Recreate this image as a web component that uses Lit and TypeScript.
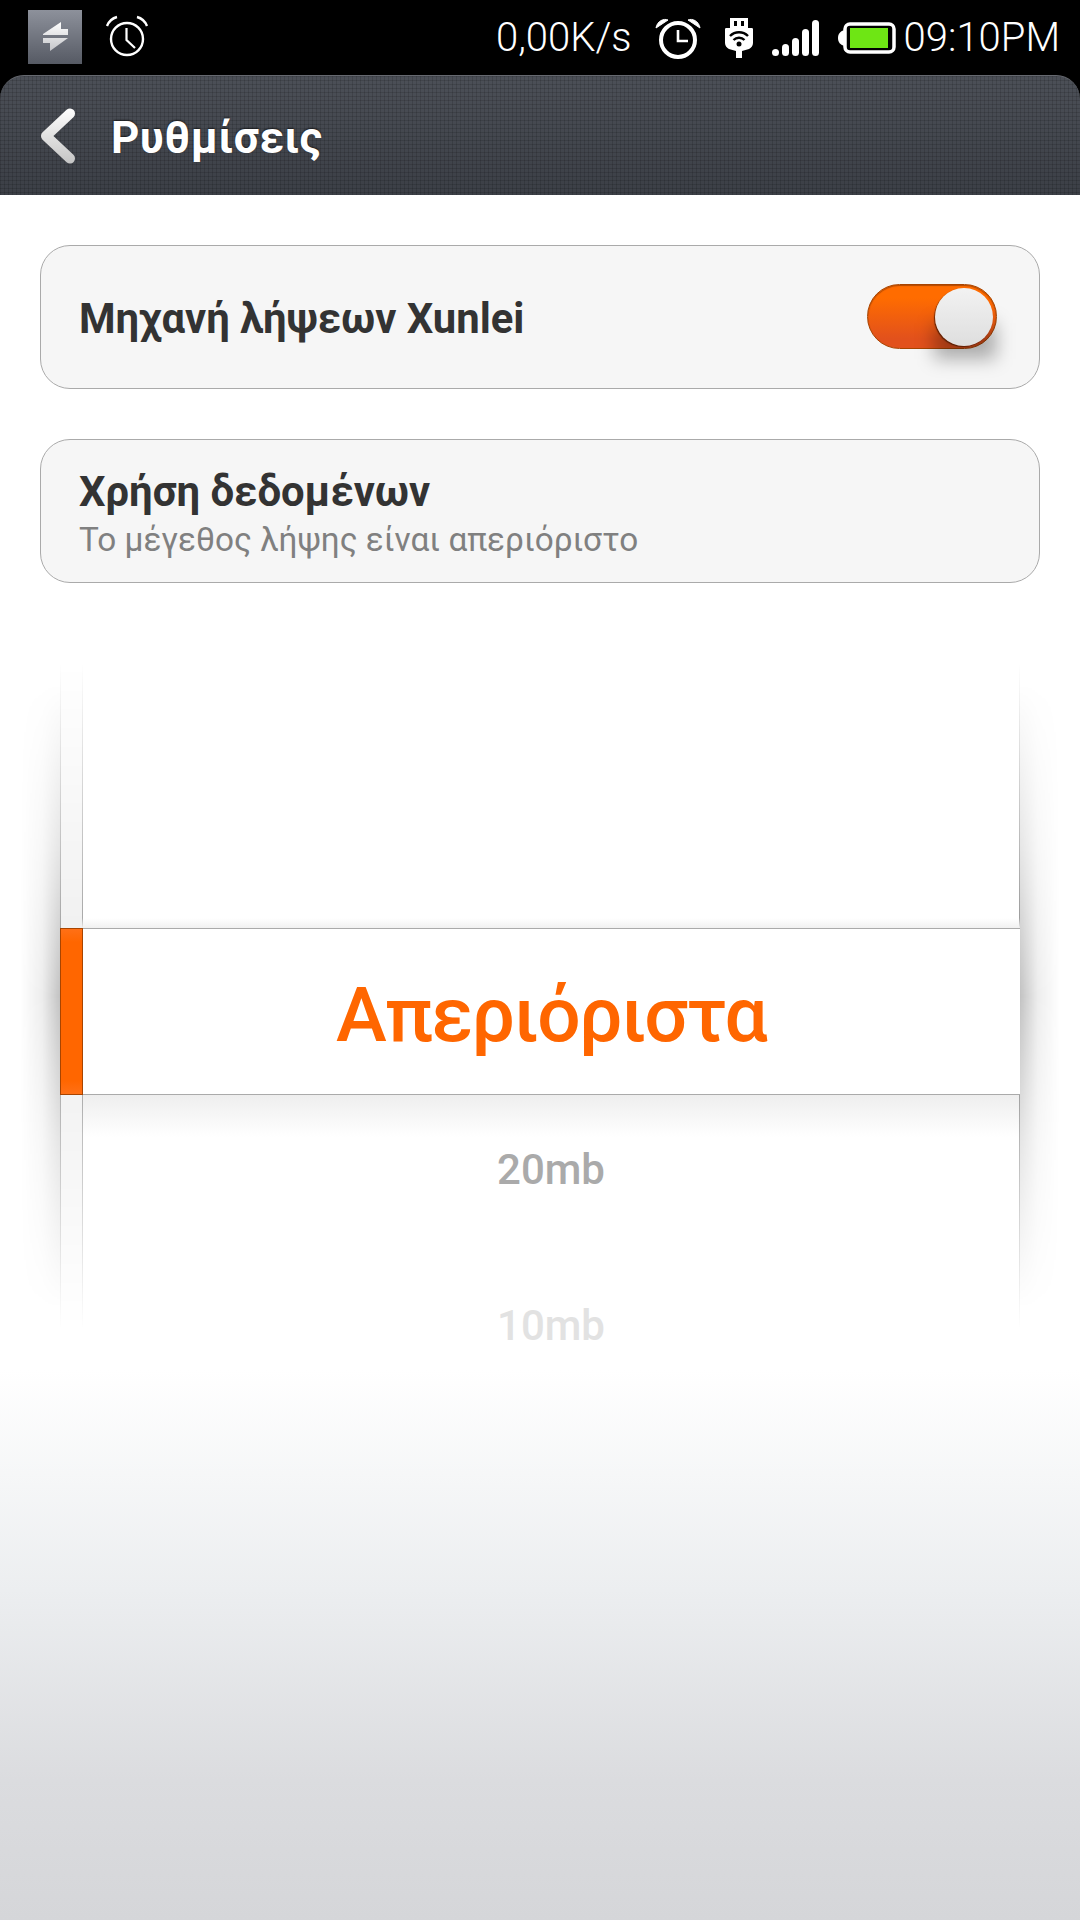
import { LitElement, html, css } from "lit";
import { customElement } from "lit/decorators.js";

@customElement("app-root")
export class AppRoot extends LitElement {
  static styles = css`
    :host {
      display: block;
      width: 1080px;
      height: 1920px;
      overflow: hidden;
      font-family: Roboto, "Noto Sans", sans-serif;
      background: linear-gradient(#fff 1370px, #eceef0 1590px, #dbdcdf 1780px, #d5d6d9 1920px);
    }
    .status {
      height: 75px;
      background: #000;
      display: flex;
      align-items: center;
      color: #fff;
      box-sizing: border-box;
      padding: 0 20px 0 28px;
    }
    .status svg { display: block; flex: none; }
    .notif { width: 54px; height: 54px; margin-top: -1px; }
    .alarm-l { margin-left: 23px; margin-top: -1px; }
    .stxt { font-size: 40px; font-weight: 300; line-height: 75px; white-space: nowrap; }
    .speed { margin-left: auto; }
    .alarm-r { margin-left: 23px; }
    .usb { margin-left: 23px; }
    .signal { margin-left: 18px; }
    .batt { margin-left: 18px; }
    .time { margin-left: 8px; }

    .bar-bg { background: #000; }
    .bar {
      height: 120px;
      border-radius: 24px 24px 0 0;
      box-sizing: border-box;
      background-color: #42464e;
      background-image:
        linear-gradient(90deg, rgba(0, 0, 0, 0.13) 1px, transparent 1px),
        linear-gradient(rgba(0, 0, 0, 0.13) 1px, transparent 1px),
        linear-gradient(rgba(255, 255, 255, 0.05), rgba(0, 0, 0, 0.1));
      background-size: 4px 4px, 4px 4px, 100% 100%;
      border-top: 1px solid #666970;
      display: flex;
      align-items: center;
      padding-left: 40px;
    }
    .title {
      margin-left: 35px;
      margin-top: 4px;
      font-size: 44px;
      font-weight: 700;
      color: #fff;
      text-shadow: 0 -1px 2px rgba(0, 0, 0, 0.6);
      letter-spacing: 0.5px;
    }
    .main { padding: 50px 40px 0; display: flex; flex-direction: column; gap: 50px; }
    .card {
      height: 144px;
      box-sizing: border-box;
      border: 1px solid #aaa;
      border-radius: 30px;
      background: #f6f6f6;
      padding: 0 42px 0 38px;
      display: flex;
      align-items: center;
      justify-content: space-between;
    }
    .ct { font-size: 41.800px; font-weight: 700; color: #333; line-height: 50px; }
    .lift { margin-top: 3px; }
    .cs { font-size: 33.300px; color: #808080; line-height: 40px; font-weight: 400; margin-top: 3px; }
    .col { display: flex; flex-direction: column; margin-top: 5px; }
    .toggle {
      position: relative;
      margin-top: -2px;
      width: 130px;
      height: 65px;
      box-sizing: border-box;
      border: 1px solid #a84400;
      border-radius: 33px;
      background: linear-gradient(#ff6c00 20%, #e2511c 85%);
      box-shadow: inset 0 1px 1px rgba(130, 50, 0, 0.6);
    }
    .shade {
      position: absolute;
      left: 66px;
      top: 38px;
      width: 62px;
      height: 36px;
      background: rgba(0, 0, 0, 0.3);
      filter: blur(9px);
    }
    .thumb {
      position: absolute;
      right: 3px;
      top: 3px;
      width: 58px;
      height: 58px;
      border-radius: 50%;
      background: linear-gradient(#f2f2f2, #dedede);
      box-shadow: -1px 1px 1px rgba(70, 25, 0, 0.8);
    }

    .picker {
      position: relative;
      margin: 80px 60px 0;
      height: 666px;
      display: grid;
      grid-template-rows: 265px 167px 234px;
    }
    .side { position: absolute; top: 0; bottom: 0; }
    .strip {
      left: 0;
      width: 23px;
      box-sizing: border-box;
      background: #efefef;
      border-left: 1px solid #9a9a9a;
      border-right: 1px solid #9a9a9a;
      -webkit-mask-image: linear-gradient(transparent, #000 45%, #000 55%, transparent);
      mask-image: linear-gradient(transparent, #000 45%, #000 55%, transparent);
    }
    .edge-r {
      right: 0;
      width: 1px;
      background: #8c8c8c;
      -webkit-mask-image: linear-gradient(transparent, #000 45%, #000 55%, transparent);
      mask-image: linear-gradient(transparent, #000 45%, #000 55%, transparent);
    }
    .sh-l, .sh-r {
      width: 40px;
      -webkit-mask-image: linear-gradient(transparent 3%, rgba(0, 0, 0, 0.42) 28%, #000 50%, rgba(0, 0, 0, 0.42) 72%, transparent 97%);
      mask-image: linear-gradient(transparent 3%, rgba(0, 0, 0, 0.42) 28%, #000 50%, rgba(0, 0, 0, 0.42) 72%, transparent 97%);
    }
    .sh-l {
      left: -40px;
      background: linear-gradient(270deg, rgba(0, 0, 0, 0.24), rgba(0, 0, 0, 0.07) 45%, transparent);
    }
    .sh-r {
      right: -40px;
      background: linear-gradient(90deg, rgba(0, 0, 0, 0.24), rgba(0, 0, 0, 0.07) 45%, transparent);
    }
    .up { position: relative; }
    .up::after {
      content: "";
      position: absolute;
      left: 22px;
      right: 0;
      bottom: 0;
      height: 10px;
      background: linear-gradient(transparent, #f0f0f0);
    }
    .sel {
      position: relative;
      box-sizing: border-box;
      border-top: 1px solid #aaa;
      border-bottom: 1px solid #aaa;
      background: #fff;
      padding: 8px 0 0 22px;
      display: flex;
      align-items: center;
      justify-content: center;
      color: #ff6600;
      font-size: 76.500px;
      font-weight: 500;
      letter-spacing: -1.500px;
      line-height: 1;
    }
    .mark {
      position: absolute;
      left: 0;
      top: -1px;
      bottom: -1px;
      width: 23px;
      box-sizing: border-box;
      background: linear-gradient(#ff7016, #ff6600 8%, #ff6600 92%, #ff7016);
      border: 1px solid #a84400;
    }
    .down {
      padding-left: 22px;
      background: linear-gradient(#eeeeee, #fff 42px) no-repeat;
      background-position: 22px 0;
      display: flex;
      flex-direction: column;
      align-items: center;
      font-size: 42px;
      font-weight: 500;
      line-height: 50px;
    }
    .i20 { color: #aaa; margin-top: 50px; }
    .i10 { color: #e2e2e2; margin-top: 106px; }
  `;

  render() {
    return html`
      <div class="status">
        <svg class="notif" width="54" height="54" viewBox="0 0 54 54">
          <defs>
            <linearGradient id="ng" x1="0" y1="0" x2="0" y2="1">
              <stop offset="0" stop-color="#8d919b" /><stop offset="1" stop-color="#565a64" />
            </linearGradient>
            <linearGradient id="nw" x1="0" y1="0" x2="0" y2="1">
              <stop offset="0" stop-color="#fff" /><stop offset="1" stop-color="#c4c5c9" />
            </linearGradient>
          </defs>
          <rect width="54" height="54" fill="url(#ng)" />
          <path d="M15 24L33 12V19H40V25H15Z M15 28H40L22 41V33H15Z" fill="url(#nw)" />
        </svg>
        <svg class="alarm-l" width="44" height="44" viewBox="0 0 44 44" fill="none" stroke="#fff">
          <circle cx="22" cy="24" r="16" stroke-width="2.4" />
          <path d="M21.5 13V25L30 33" stroke-width="2.2" />
          <path d="M2 11C4 6 8 3 12 2M42 11C40 6 36 3 32 2" stroke-width="2.4" />
        </svg>
        <span class="stxt speed">0,00K/s</span>
        <svg class="alarm-r" width="46" height="42" viewBox="0 0 46 42" fill="none" stroke="#fff">
          <circle cx="23" cy="23" r="17" stroke-width="4" />
          <path d="M23 13V24H33" stroke-width="2.6" />
          <path d="M1 11C2 4 9 1 13 3ZM45 11C44 4 37 1 33 3Z" fill="#fff" stroke-width="1" />
        </svg>
        <svg class="usb" width="30" height="42" viewBox="0 0 30 42">
          <path fill="#fff" fill-rule="evenodd" d="M6 1H24V11H28C29 11 29 12 29 13V26C29 29 27 31 25 32L18 34V41H12V34L5 32C3 31 1 29 1 26V13C1 12 1 11 2 11H6ZM10 4V9H13V4ZM17 4V9H20V4Z" />
          <path fill="none" stroke="#000" stroke-width="2.4" d="M6 19C11 14 19 14 24 19M9.5 23C12.5 20 17.500 20 20.500 23" />
          <circle cx="15" cy="27" r="2.500" fill="#000" />
        </svg>
        <svg class="signal" width="48" height="36" viewBox="0 0 48 36" fill="#fff">
          <rect x="0" y="29" width="7" height="7" rx="3.500" />
          <rect x="10" y="24" width="7" height="12" rx="3.500" />
          <rect x="20" y="18" width="7" height="18" rx="3.500" />
          <rect x="30" y="9" width="7" height="27" rx="3.500" />
          <rect x="40" y="0" width="7" height="36" rx="3.500" />
        </svg>
        <svg class="batt" width="58" height="32" viewBox="0 0 58 32">
          <path d="M7 8C2 9 0 12 0 16C0 20 2 23 7 24Z" fill="#fff" />
          <rect x="7" y="2" width="49" height="28" rx="5" fill="none" stroke="#fff" stroke-width="3.500" />
          <rect x="12" y="6" width="38" height="20" fill="#6ee614" />
        </svg>
        <span class="stxt time">09:10PM</span>
      </div>
      <div class="bar-bg">
        <div class="bar">
          <svg width="36" height="56" viewBox="0 0 36 56" fill="none">
            <defs>
              <linearGradient id="bk" gradientUnits="userSpaceOnUse" x1="0" y1="0" x2="0" y2="56">
                <stop offset="0" stop-color="#fff" /><stop offset="1" stop-color="#c4c4c4" />
              </linearGradient>
            </defs>
            <path d="M30 5.500L6 28L30 50.500" stroke="url(#bk)" stroke-width="10" stroke-linecap="round" stroke-linejoin="round" />
          </svg>
          <span class="title">Ρυθμίσεις</span>
        </div>
      </div>
      <div class="main">
        <div class="card">
          <span class="ct lift">Μηχανή λήψεων Xunlei</span>
          <div class="toggle">
            <div class="shade"></div>
            <div class="thumb"></div>
          </div>
        </div>
        <div class="card">
          <div class="col">
            <span class="ct">Χρήση δεδομένων</span>
            <span class="cs">Το μέγεθος λήψης είναι απεριόριστο</span>
          </div>
        </div>
      </div>
      <div class="picker">
        <div class="side sh-l"></div>
        <div class="side sh-r"></div>
        <div class="side strip"></div>
        <div class="side edge-r"></div>
        <div class="up"></div>
        <div class="sel"><div class="mark"></div>Απεριόριστα</div>
        <div class="down">
          <span class="i20">20mb</span>
          <span class="i10">10mb</span>
        </div>
      </div>
    `;
  }
}
